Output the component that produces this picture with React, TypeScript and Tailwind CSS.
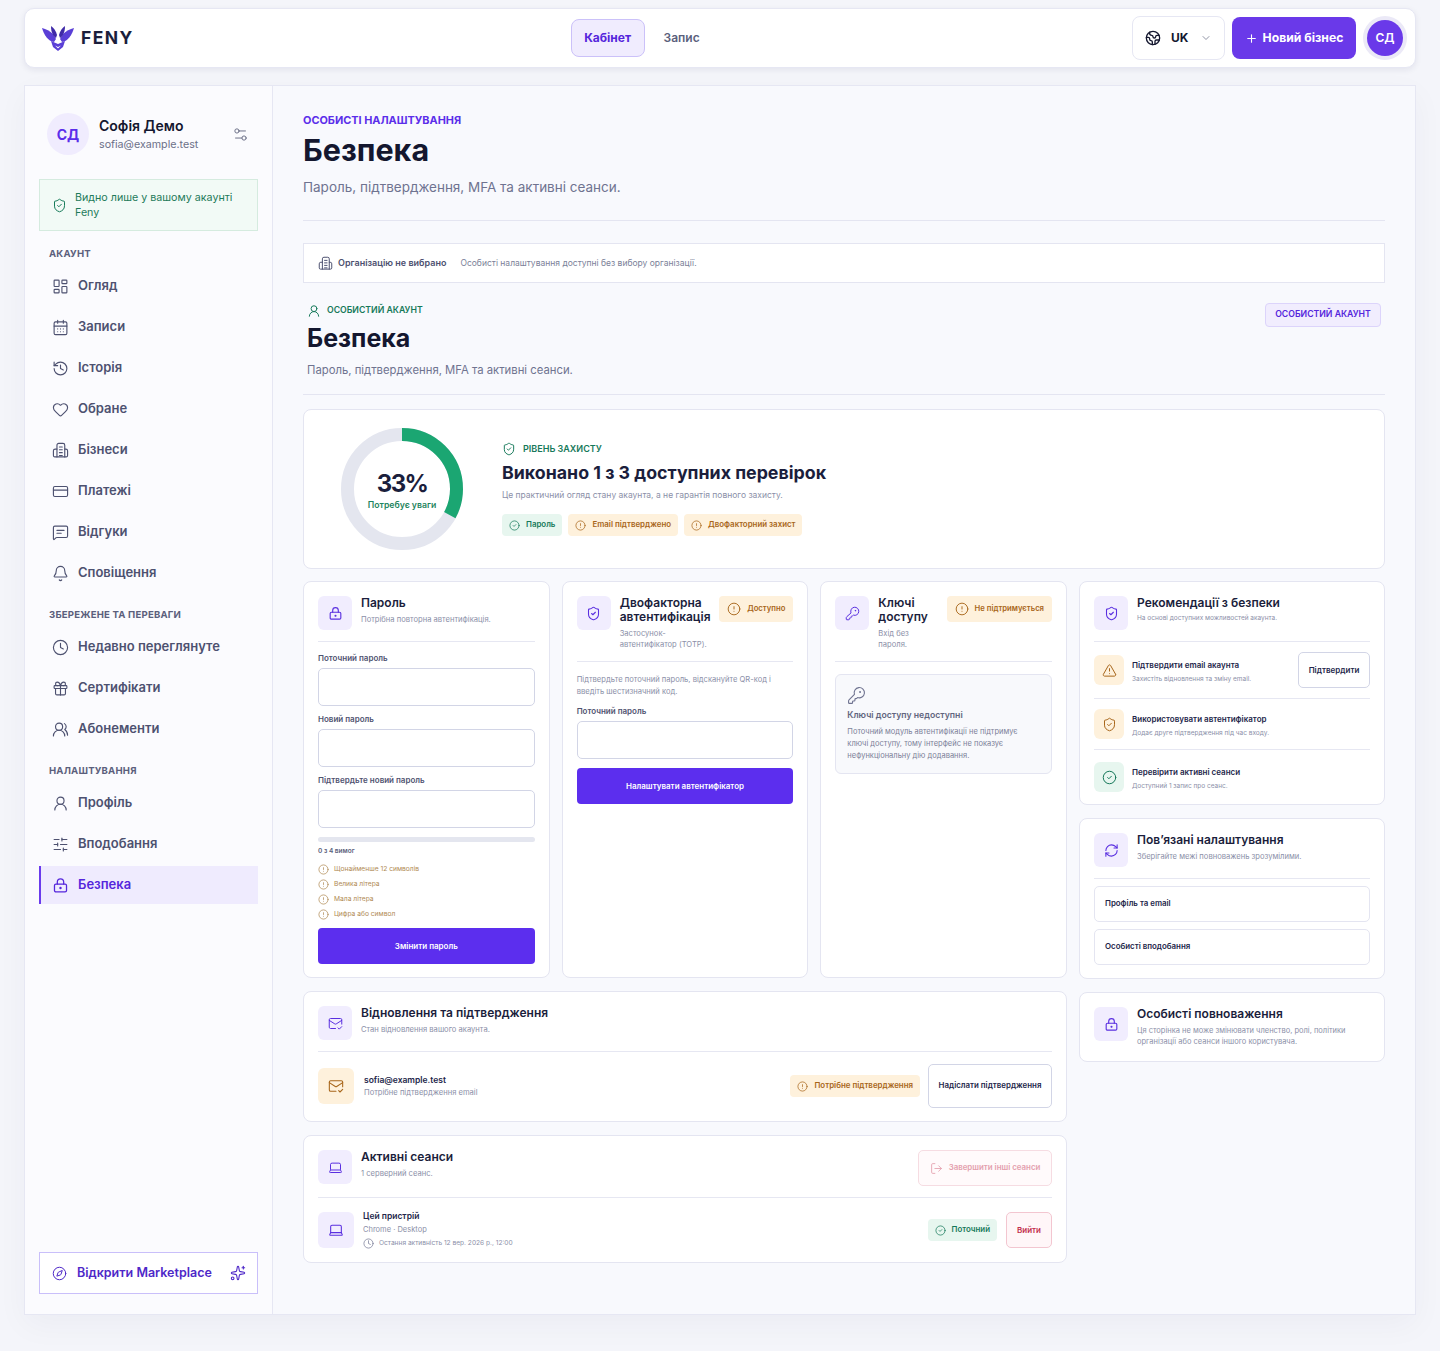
import type { ReactNode } from "react";
import {
  Bell,
  CalendarDays,
  ChevronDown,
  CircleAlert,
  CircleCheck,
  Clock,
  Compass,
  CreditCard,
  Earth,
  Gift,
  Heart,
  History,
  KeyRound,
  Laptop,
  LayoutDashboard,
  LogOut,
  MailCheck,
  Plus,
  RefreshCw,
  Settings2,
  ShieldCheck,
  SlidersHorizontal,
  Sparkles,
  TriangleAlert,
  UserRound,
  UsersRound,
} from "lucide-react";

const IconLock = ({ className }: { className?: string }) => (
  <svg viewBox="0 0 24 24" fill="none" stroke="currentColor" strokeWidth="1.8" strokeLinecap="round" strokeLinejoin="round" className={className}>
    <rect x="3.5" y="10" width="17" height="11" rx="2" />
    <path d="M7.5 10V7a4.5 4.5 0 0 1 9 0v3" />
    <circle cx="12" cy="15.5" r="0.8" fill="currentColor" />
  </svg>
);

const IconBuilding = ({ className }: { className?: string }) => (
  <svg viewBox="0 0 24 24" fill="none" stroke="currentColor" strokeWidth="1.6" strokeLinecap="round" strokeLinejoin="round" className={className}>
    <path d="M7 21V4.5A2.5 2.5 0 0 1 9.500 2h6A2.500 2.500 0 0 1 18 4.500V21" />
    <path d="M7 10H4.500A2.500 2.500 0 0 0 2 12.500V19a2 2 0 0 0 2 2h16a2 2 0 0 0 2-2v-6.500A2.500 2.500 0 0 0 19.500 10H18" />
    <path d="M10.500 7h4M10.500 11h4M10.500 15h4M10.500 19h4" />
  </svg>
);

const IconReview = ({ className }: { className?: string }) => (
  <svg viewBox="0 0 24 24" fill="none" stroke="currentColor" strokeWidth="1.6" strokeLinecap="round" strokeLinejoin="round" className={className}>
    <path d="M22 17a2 2 0 0 1-2 2H6.828a2 2 0 0 0-1.414.586l-2.202 2.202A.71.71 0 0 1 2 21.286V5a2 2 0 0 1 2-2h16a2 2 0 0 1 2 2z" />
    <path d="M7 9h10M7 13h6" />
  </svg>
);

const Logo = () => (
  <svg viewBox="0 0 32 25" className="h-[25px] w-[32px]">
    <path d="M0 2c4 1 8 3 11 6l3 5-2 3C6 15 2 9 0 2Z" fill="#5a3fd6" />
    <path d="M32 2c-4 1-8 3-11 6l-3 5 2 3c6-1 10-7 12-14Z" fill="#5a3fd6" />
    <path d="M9 0c3 2 5 5 6 9l-1 3C11 10 9 6 9 0Z" fill="#3f2aa8" />
    <path d="M23 0c-3 2-5 5-6 9l1 3c3-2 5-6 5-12Z" fill="#3f2aa8" />
    <path d="M9 15l7 3 7-3-2 6-5 4-5-4-2-6Z" fill="#5a3fd6" />
    <path d="M13 19.500l3 1.500 3-1.500-3 3Z" fill="#ffffff" />
  </svg>
);

type NavItem = { label: string; icon: ReactNode; active?: boolean };

const navIcon = "h-[17px] w-[17px] shrink-0";

const accountNav: NavItem[] = [
  { label: "Огляд", icon: <LayoutDashboard strokeWidth={1.6} className={navIcon} /> },
  { label: "Записи", icon: <CalendarDays strokeWidth={1.6} className={navIcon} /> },
  { label: "Історія", icon: <History strokeWidth={1.6} className={navIcon} /> },
  { label: "Обране", icon: <Heart strokeWidth={1.6} className={navIcon} /> },
  { label: "Бізнеси", icon: <IconBuilding className={navIcon} /> },
  { label: "Платежі", icon: <CreditCard strokeWidth={1.6} className={navIcon} /> },
  { label: "Відгуки", icon: <IconReview className={navIcon} /> },
  { label: "Сповіщення", icon: <Bell strokeWidth={1.6} className={navIcon} /> },
];

const savedNav: NavItem[] = [
  { label: "Недавно переглянуте", icon: <Clock strokeWidth={1.6} className={navIcon} /> },
  { label: "Сертифікати", icon: <Gift strokeWidth={1.6} className={navIcon} /> },
  { label: "Абонементи", icon: <UsersRound strokeWidth={1.6} className={navIcon} /> },
];

const settingsNav: NavItem[] = [
  { label: "Профіль", icon: <UserRound strokeWidth={1.6} className={navIcon} /> },
  { label: "Вподобання", icon: <SlidersHorizontal strokeWidth={1.6} className={navIcon} /> },
  { label: "Безпека", icon: <IconLock className={navIcon} />, active: true },
];

const NavLink = ({ item }: { item: NavItem }) => (
  <div
    className={
      item.active
        ? "flex h-[38px] items-center gap-[9px] border-l-2 border-[#6a3bed] bg-[#efebfe] pl-[11px] text-[13px] font-semibold text-[#5526dc]"
        : "flex h-[38px] items-center gap-[9px] border-l-2 border-transparent pl-[11px] text-[13px] font-semibold text-[#4d5170]"
    }
  >
    {item.icon}
    {item.label}
  </div>
);

const NavGroup = ({ title, items }: { title: string; items: NavItem[] }) => (
  <div>
    <p className="mb-[6px] pl-[10px] text-[9.600px] leading-[14px] font-bold tracking-[0.02em] text-[#5b5f7c]">{title}</p>
    <div className="flex flex-col gap-[3px]">
      {items.map((item) => (
        <NavLink key={item.label} item={item} />
      ))}
    </div>
  </div>
);

const Sidebar = () => (
  <aside className="flex w-[248px] shrink-0 flex-col border-r border-[#e6e7f3] bg-[#fbfbfe] pt-[27px] pr-[14px] pb-[20px] pl-[14px]">
    <div className="flex items-center pl-[8px]">
      <div className="flex h-[42px] w-[42px] shrink-0 items-center justify-center rounded-full bg-[#f0ecfe] text-[14px] font-bold text-[#5b2eea]">СД</div>
      <div className="ml-[10px] flex-1">
        <p className="text-[14px] leading-[20px] font-semibold text-[#14172f]">Софія Демо</p>
        <p className="mt-[2px] text-[10.700px] leading-[14px] text-[#6c7088]">sofia@example.test</p>
      </div>
      <Settings2 strokeWidth={1.4} className="mr-[9px] h-[17px] w-[17px] text-[#6c7088]" />
    </div>
    <div className="mt-[24px] flex h-[52px] items-center gap-[8px] border border-[#d5ebdf] bg-[#f2faf6] pr-[8px] pl-[12px]">
      <ShieldCheck strokeWidth={1.6} className="h-[15px] w-[15px] shrink-0 text-[#147a58]" />
      <p className="text-[10.700px] leading-[15px] text-[#1e7a5a]">Видно лише у вашому акаунті Feny</p>
    </div>
    <div className="mt-[16px] flex flex-col gap-[16px]">
      <NavGroup title="АКАУНТ" items={accountNav} />
      <NavGroup title="ЗБЕРЕЖЕНЕ ТА ПЕРЕВАГИ" items={savedNav} />
      <NavGroup title="НАЛАШТУВАННЯ" items={settingsNav} />
    </div>
    <div className="mt-auto flex h-[42px] items-center border border-[#c9bffa] bg-white pr-[11px] pl-[12px] text-[#4e28c8]">
      <Compass strokeWidth={1.6} className="h-[15px] w-[15px] shrink-0" />
      <span className="ml-[10px] flex-1 text-[12.500px] font-semibold">Відкрити Marketplace</span>
      <Sparkles strokeWidth={1.6} className="h-[16px] w-[16px] shrink-0" />
    </div>
  </aside>
);

const IconBox = ({ children, tone = "violet", size = "h-[34px] w-[34px]" }: { children: ReactNode; tone?: "violet" | "amber" | "green"; size?: string }) => {
  const tones = {
    violet: "bg-[#f1edfe] text-[#5a2fe0]",
    amber: "bg-[#fef1dc] text-[#a8661a]",
    green: "bg-[#e7f6ef] text-[#16795a]",
  };
  return <div className={`flex shrink-0 items-center justify-center rounded-[6px] ${size} ${tones[tone]}`}>{children}</div>;
};

const Pill = ({ tone, children }: { tone: "amber" | "green"; children: ReactNode }) => (
  <span
    className={
      tone === "amber"
        ? "inline-flex h-[22px] shrink-0 items-center gap-[6px] rounded-[4px] bg-[#fef1dc] px-[7px] text-[7.900px] font-semibold whitespace-nowrap text-[#a8661a]"
        : "inline-flex h-[22px] shrink-0 items-center gap-[6px] rounded-[4px] bg-[#e7f6ef] px-[7px] text-[7.900px] font-semibold whitespace-nowrap text-[#16795a]"
    }
  >
    {tone === "amber" ? (
      <CircleAlert strokeWidth={1.6} className="h-[11px] w-[11px] shrink-0" />
    ) : (
      <CircleCheck strokeWidth={1.6} className="h-[11px] w-[11px] shrink-0" />
    )}
    {children}
  </span>
);

const HeadPill = ({ children }: { children: ReactNode }) => (
  <span className="inline-flex h-[26px] shrink-0 items-center gap-[6px] rounded-[4px] bg-[#fef1dc] px-[8px] text-[7.700px] font-semibold whitespace-nowrap text-[#a8661a]">
    <CircleAlert strokeWidth={1.6} className="h-[14px] w-[14px] shrink-0" />
    {children}
  </span>
);

const Card = ({ children, className = "" }: { children: ReactNode; className?: string }) => (
  <section className={`rounded-[8px] border border-[#e4e5f1] bg-white px-[14px] pt-[14px] pb-[13px] ${className}`}>{children}</section>
);

const CardHead = ({
  icon,
  title,
  sub,
  side,
  subClass = "mt-[4px] leading-[12px]",
}: {
  icon: ReactNode;
  title: ReactNode;
  sub: ReactNode;
  side?: ReactNode;
  subClass?: string;
}) => (
  <div className="flex items-start gap-[9px] border-b border-[#e6e7f2] pb-[11px]">
    <IconBox>{icon}</IconBox>
    <div className="min-w-0 flex-1">
      <h3 className="text-[12px] leading-[14px] font-semibold text-[#1b1e3c]">{title}</h3>
      <p className={`text-[7.600px] text-[#8b8fa8] ${subClass}`}>{sub}</p>
    </div>
    {side}
  </div>
);

const Field = ({ label, className = "" }: { label: string; className?: string }) => (
  <div className={className}>
    <p className="text-[8px] leading-[10px] font-semibold text-[#4f5370]">{label}</p>
    <div className="mt-[5px] h-[38px] rounded-[5px] border border-[#d2d5e6] bg-white" />
  </div>
);

const PrimaryButton = ({ children, className = "" }: { children: ReactNode; className?: string }) => (
  <div className={`flex h-[36px] items-center justify-center rounded-[4px] bg-[#5c2eee] text-[8px] font-semibold text-white ${className}`}>{children}</div>
);

const headIcon = "h-[15px] w-[15px]";

const PasswordCard = () => (
  <Card>
    <CardHead icon={<IconLock className={headIcon} />} title="Пароль" sub="Потрібна повторна автентифікація." />
    <Field label="Поточний пароль" className="mt-[11px]" />
    <Field label="Новий пароль" className="mt-[8px]" />
    <Field label="Підтвердьте новий пароль" className="mt-[8px]" />
    <div className="mt-[9px] h-[5px] rounded-full bg-[#e4e6ef]" />
    <p className="mt-[4px] text-[6.500px] leading-[10px] font-semibold text-[#5b5f7c]">0 з 4 вимог</p>
    <div className="mt-[7px] flex flex-col gap-[3px]">
      {["Щонайменше 12 символів", "Велика літера", "Мала літера", "Цифра або символ"].map((req) => (
        <div key={req} className="flex h-[12px] items-center gap-[5px] text-[6.700px] text-[#b08a54]">
          <CircleAlert strokeWidth={1.6} className="h-[11px] w-[11px] shrink-0" />
          {req}
        </div>
      ))}
    </div>
    <PrimaryButton className="mt-[8px]">Змінити пароль</PrimaryButton>
  </Card>
);

const TwoFactorCard = () => (
  <Card>
    <CardHead
      icon={<ShieldCheck strokeWidth={1.7} className={headIcon} />}
      title="Двофакторна автентифікація"
      subClass="mt-[4px] leading-[11px]"
      sub={
        <>
          Застосунок-
          <br />
          автентифікатор (TOTP).
        </>
      }
      side={<HeadPill>Доступно</HeadPill>}
    />
    <p className="mt-[12px] text-[7.600px] leading-[12px] text-[#8b8fa8]">Підтвердьте поточний пароль, відскануйте QR-код і введіть шестизначний код.</p>
    <Field label="Поточний пароль" className="mt-[8px]" />
    <PrimaryButton className="mt-[9px]">Налаштувати автентифікатор</PrimaryButton>
  </Card>
);

const PasskeysCard = () => (
  <Card>
    <CardHead
      icon={<KeyRound strokeWidth={1.6} className={headIcon} />}
      title={
        <>
          Ключі
          <br />
          доступу
        </>
      }
      subClass="mt-[4px] leading-[11px]"
      sub={
        <>
          Вхід без
          <br />
          пароля.
        </>
      }
      side={<HeadPill>Не підтримується</HeadPill>}
    />
    <div className="mt-[12px] h-[100px] rounded-[6px] border border-[#e4e5f1] bg-[#f8f9fc] px-[11px] pt-[11px]">
      <KeyRound strokeWidth={1.4} className="h-[19px] w-[19px] text-[#6f7390]" />
      <p className="mt-[4px] text-[8.700px] leading-[12px] font-semibold text-[#62667f]">Ключі доступу недоступні</p>
      <p className="mt-[5px] text-[7.500px] leading-[12px] text-[#7b7f98]">Поточний модуль автентифікації не підтримує ключі доступу, тому інтерфейс не показує нефункціональну дію додавання.</p>
    </div>
  </Card>
);

const RecRow = ({ icon, tone, title, sub, side, className }: { icon: ReactNode; tone: "amber" | "green"; title: string; sub: string; side?: ReactNode; className: string }) => (
  <div className={`flex items-center gap-[8px] ${className}`}>
    <IconBox tone={tone} size="h-[30px] w-[30px]">
      {icon}
    </IconBox>
    <div className="min-w-0 flex-1 pt-[2px]">
      <p className="text-[8px] leading-[12px] font-semibold text-[#23264a]">{title}</p>
      <p className="mt-[3px] text-[6.500px] leading-[10px] text-[#8b8fa8]">{sub}</p>
    </div>
    {side}
  </div>
);

const RecommendationsCard = () => (
  <Card className="h-[224px]">
    <CardHead icon={<ShieldCheck strokeWidth={1.7} className={headIcon} />} title="Рекомендації з безпеки" sub="На основі доступних можливостей акаунта." subClass="mt-[3px] text-[6.500px]! leading-[11px]" />
    <RecRow
      className="h-[57px] border-b border-[#e6e7f2]"
      tone="amber"
      icon={<TriangleAlert strokeWidth={1.6} className={headIcon} />}
      title="Підтвердити email акаунта"
      sub="Захистіть відновлення та зміну email."
      side={<div className="flex h-[36px] w-[72px] items-center justify-center rounded-[5px] border border-[#d2d5e6] text-[8px] font-semibold text-[#23264a]">Підтвердити</div>}
    />
    <RecRow
      className="h-[51px] border-b border-[#e6e7f2]"
      tone="amber"
      icon={<ShieldCheck strokeWidth={1.6} className={headIcon} />}
      title="Використовувати автентифікатор"
      sub="Додає друге підтвердження під час входу."
    />
    <RecRow className="h-[54px]" tone="green" icon={<CircleCheck strokeWidth={1.6} className={headIcon} />} title="Перевірити активні сеанси" sub="Доступний 1 запис про сеанс." />
  </Card>
);

const RelatedCard = () => (
  <Card className="h-[161px]">
    <CardHead icon={<RefreshCw strokeWidth={1.7} className={headIcon} />} title="Пов’язані налаштування" sub="Зберігайте межі повноважень зрозумілими." />
    <div className="mt-[7px] flex flex-col gap-[7px]">
      {["Профіль та email", "Особисті вподобання"].map((link) => (
        <div key={link} className="flex h-[36px] items-center rounded-[5px] border border-[#e4e5f1] pl-[10px] text-[7.900px] font-semibold text-[#23264a]">
          {link}
        </div>
      ))}
    </div>
  </Card>
);

const PermissionsCard = () => (
  <section className="flex h-[70px] items-start gap-[9px] rounded-[8px] border border-[#e4e5f1] bg-white px-[14px] pt-[14px]">
    <IconBox>
      <IconLock className={headIcon} />
    </IconBox>
    <div>
      <h3 className="text-[12px] leading-[14px] font-semibold text-[#1b1e3c]">Особисті повноваження</h3>
      <p className="mt-[4px] text-[7.500px] leading-[11px] text-[#8b8fa8]">Ця сторінка не може змінювати членство, ролі, політики організації або сеанси іншого користувача.</p>
    </div>
  </section>
);

const RecoveryCard = () => (
  <Card className="h-[131px]">
    <CardHead icon={<MailCheck strokeWidth={1.6} className={headIcon} />} title="Відновлення та підтвердження" sub="Стан відновлення вашого акаунта." />
    <div className="mt-[12px] flex items-center">
      <IconBox tone="amber" size="h-[36px] w-[36px]">
        <MailCheck strokeWidth={1.6} className="h-[16px] w-[16px]" />
      </IconBox>
      <div className="ml-[10px] flex-1">
        <p className="text-[8.500px] leading-[12px] font-semibold text-[#23264a]">sofia@example.test</p>
        <p className="mt-[1px] text-[7.600px] leading-[12px] text-[#8b8fa8]">Потрібне підтвердження email</p>
      </div>
      <Pill tone="amber">Потрібне підтвердження</Pill>
      <div className="ml-[8px] flex h-[44px] w-[124px] items-center justify-center rounded-[5px] border border-[#d2d5e6] text-[7.900px] font-semibold text-[#23264a]">Надіслати підтвердження</div>
    </div>
  </Card>
);

const SessionsCard = () => (
  <Card className="h-[128px]">
    <CardHead
      icon={<Laptop strokeWidth={1.6} className={headIcon} />}
      title="Активні сеанси"
      sub="1 серверний сеанс."
      side={
        <div className="flex h-[36px] w-[134px] shrink-0 items-center justify-center gap-[6px] rounded-[5px] border border-[#f6dce2] bg-[#fffafb] text-[7.900px] font-semibold text-[#e4a0ae]">
          <LogOut strokeWidth={1.6} className="h-[13px] w-[13px]" />
          Завершити інші сеанси
        </div>
      }
    />
    <div className="mt-[13px] flex items-center">
      <IconBox size="h-[36px] w-[36px]">
        <Laptop strokeWidth={1.6} className="h-[16px] w-[16px]" />
      </IconBox>
      <div className="ml-[9px] flex-1">
        <p className="text-[8.500px] leading-[11px] font-semibold text-[#23264a]">Цей пристрій</p>
        <p className="mt-[2px] text-[7.500px] leading-[11px] text-[#8b8fa8]">Chrome · Desktop</p>
        <p className="mt-[3px] flex items-center gap-[5px] text-[6.600px] leading-[11px] text-[#8b8fa8]">
          <Clock strokeWidth={1.5} className="h-[11px] w-[11px] text-[#6f7390]" />
          Остання активність 12 вер. 2026 р., 12:00
        </p>
      </div>
      <Pill tone="green">Поточний</Pill>
      <div className="ml-[9px] flex h-[36px] w-[46px] items-center justify-center rounded-[5px] border border-[#f3c6d0] bg-[#fff6f8] text-[8px] font-semibold text-[#c22f4d]">Вийти</div>
    </div>
  </Card>
);

const ScoreCard = () => (
  <section className="flex h-[160px] items-center rounded-[8px] border border-[#e4e5f1] bg-white pl-[37px]">
    <div className="relative h-[122px] w-[122px] shrink-0">
      <svg viewBox="0 0 122 122" className="h-[122px] w-[122px] -rotate-90">
        <circle cx="61" cy="61" r="54.500" fill="none" stroke="#e4e6ef" strokeWidth="13" />
        <circle cx="61" cy="61" r="54.500" fill="none" stroke="#1ba672" strokeWidth="13" pathLength="100" strokeDasharray="33 67" />
      </svg>
      <div className="absolute inset-0 flex flex-col items-center justify-center pt-[2px]">
        <p className="text-[24px] leading-[28px] font-bold tracking-[-0.07em] text-[#1b1e3c]">33%</p>
        <p className="mt-[1px] text-[8.700px] leading-[12px] font-semibold text-[#1f8560]">Потребує уваги</p>
      </div>
    </div>
    <div className="ml-[39px]">
      <div className="flex items-center gap-[7px] text-[#16795a]">
        <ShieldCheck strokeWidth={1.7} className="h-[14px] w-[14px]" />
        <span className="text-[9px] font-semibold">РІВЕНЬ ЗАХИСТУ</span>
      </div>
      <h2 className="mt-[5px] text-[17.800px] leading-[24px] font-bold text-[#1b1e3c]">Виконано 1 з 3 доступних перевірок</h2>
      <p className="mt-[4px] text-[8.500px] leading-[12px] text-[#8b8fa8]">Це практичний огляд стану акаунта, а не гарантія повного захисту.</p>
      <div className="mt-[13px] flex gap-[6px]">
        <Pill tone="green">Пароль</Pill>
        <Pill tone="amber">Email підтверджено</Pill>
        <Pill tone="amber">Двофакторний захист</Pill>
      </div>
    </div>
  </section>
);

const Main = () => (
  <main className="min-w-0 flex-1 bg-[#f8f9fd] px-[30px] pt-[27px] pb-[50px]">
    <p className="text-[10.900px] leading-[14px] font-bold text-[#5b2eea]">ОСОБИСТІ НАЛАШТУВАННЯ</p>
    <h1 className="mt-[4px] text-[30.500px] leading-[38px] font-bold text-[#14172f]">Безпека</h1>
    <p className="mt-[8px] text-[13.500px] leading-[20px] text-[#6f7390]">Пароль, підтвердження, MFA та активні сеанси.</p>
    <div className="mt-[23px] h-px bg-[#e4e5f1]" />
    <div className="mt-[22px] flex h-[40px] items-center border border-[#e4e5f1] bg-white pl-[14px]">
      <IconBuilding className="h-[15px] w-[15px] text-[#4d5170]" />
      <span className="ml-[5px] text-[9px] font-semibold text-[#4d5170]">Організацію не вибрано</span>
      <span className="ml-[14px] text-[8.500px] text-[#7b7f98]">Особисті налаштування доступні без вибору організації.</span>
    </div>
    <div className="mt-[20px] flex items-start justify-between border-b border-[#e4e5f1] px-[4px] pb-[15px]">
      <div>
        <div className="flex items-center gap-[6px] pt-[1px] text-[#16795a]">
          <UserRound strokeWidth={1.7} className="h-[14px] w-[14px]" />
          <span className="text-[8.700px] font-semibold">ОСОБИСТИЙ АКАУНТ</span>
        </div>
        <h2 className="mt-[4px] text-[25px] leading-[32px] font-bold text-[#14172f]">Безпека</h2>
        <p className="mt-[7px] text-[11.300px] leading-[18px] text-[#6f7390]">Пароль, підтвердження, MFA та активні сеанси.</p>
      </div>
      <span className="flex h-[24px] w-[116px] items-center justify-center rounded-[4px] border border-[#dcd4fb] bg-[#f1edfe] text-[8.700px] font-semibold text-[#5526dc]">ОСОБИСТИЙ АКАУНТ</span>
    </div>
    <div className="mt-[14px]">
      <ScoreCard />
    </div>
    <div className="mt-[12px] grid grid-cols-[1fr_306px] gap-x-3">
      <div className="flex flex-col gap-[13px]">
        <div className="grid h-[397px] grid-cols-3 gap-x-3">
          <PasswordCard />
          <TwoFactorCard />
          <PasskeysCard />
        </div>
        <RecoveryCard />
        <SessionsCard />
      </div>
      <div className="flex flex-col gap-[13px]">
        <RecommendationsCard />
        <RelatedCard />
        <PermissionsCard />
      </div>
    </div>
  </main>
);

const Header = () => (
  <header className="flex h-[60px] items-center rounded-[10px] border border-[#e6e7f3] bg-white pr-[8px] pl-[17px] shadow-[0_2px_6px_rgba(30,30,80,0.08)]">
    <Logo />
    <span className="ml-[7px] text-[17.500px] font-bold tracking-[0.08em] text-[#1b1e3c]">FENY</span>
    <nav className="ml-[437px] flex items-center gap-[6px]">
      <span className="flex h-[38px] w-[74px] items-center justify-center rounded-[8px] border border-[#cbc1f9] bg-[#f0ecfe] text-[12px] font-bold text-[#5526dc]">Кабінет</span>
      <span className="flex h-[38px] w-[62px] items-center justify-center text-[12px] font-semibold text-[#5b5f7c]">Запис</span>
    </nav>
    <div className="ml-auto flex items-center">
      <div className="flex h-[44px] w-[93px] items-center rounded-[8px] border border-[#e6e7f3] pl-[12px]">
        <Earth strokeWidth={2} className="h-[16px] w-[16px] text-[#14172f]" />
        <span className="ml-[10px] text-[12px] font-bold text-[#14172f]">UK</span>
        <ChevronDown strokeWidth={1.5} className="ml-[12px] h-[12px] w-[12px] text-[#6c7088]" />
      </div>
      <div className="ml-[7px] flex h-[42px] w-[124px] items-center justify-center gap-[5px] rounded-[8px] bg-[#6a39e9] text-[12.200px] font-bold text-white">
        <Plus strokeWidth={2} className="h-[13px] w-[13px]" />
        Новий бізнес
      </div>
      <div className="mr-[4px] ml-[11px] flex h-[36px] w-[36px] items-center justify-center rounded-full bg-[#6a39e9] text-[12px] font-semibold text-white ring-4 ring-[#ebe9f7]">СД</div>
    </div>
  </header>
);

export default function App() {
  return (
    <div className="min-h-[1351px] bg-[#f4f5fa] px-[24px] pt-[8px] font-['Inter',sans-serif]">
      <Header />
      <div className="mt-[17px] flex h-[1230px] border border-[#e6e7f3] shadow-[0_10px_30px_rgba(30,30,80,0.04)]">
        <Sidebar />
        <Main />
      </div>
    </div>
  );
}
